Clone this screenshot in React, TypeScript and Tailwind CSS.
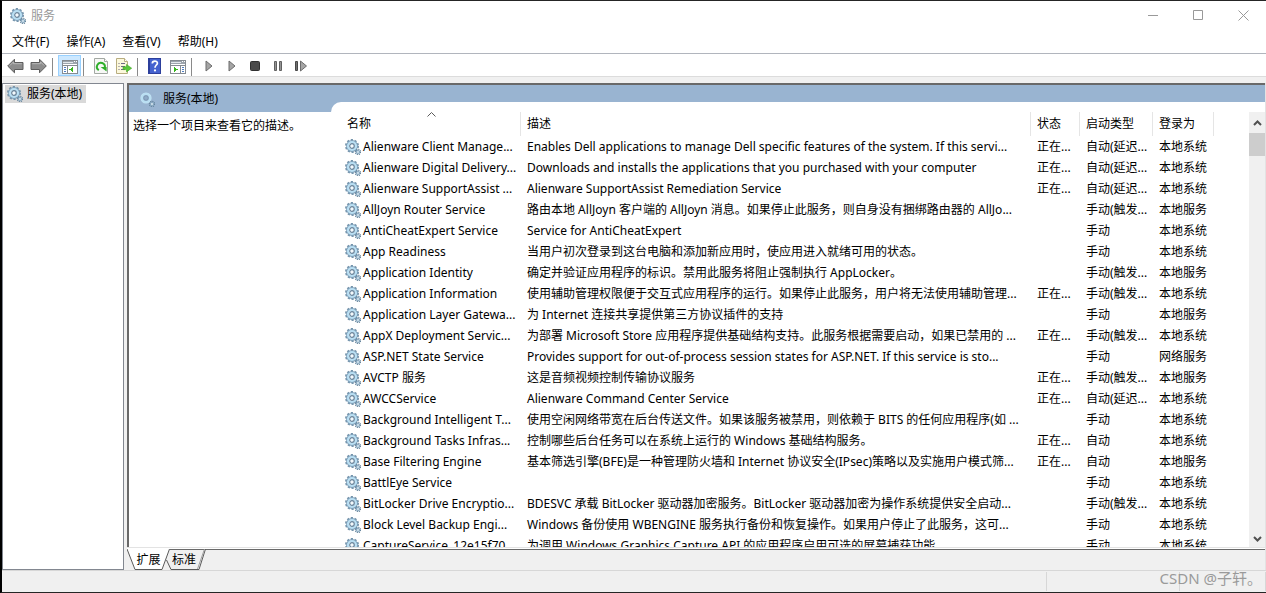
import type { ReactNode } from 'react'

interface Service {
  name: string
  description: string
  status: string
  startup: string
  logon: string
}

const RUNNING = '正在...'
const LOCAL_SYSTEM = '本地系统'
const LOCAL_SERVICE = '本地服务'

const SERVICES: Service[] = [
  { name: 'Alienware Client Manage...', description: 'Enables Dell applications to manage Dell specific features of the system. If this servi...', status: RUNNING, startup: '自动(延迟...', logon: LOCAL_SYSTEM },
  { name: 'Alienware Digital Delivery...', description: 'Downloads and installs the applications that you purchased with your computer', status: RUNNING, startup: '自动(延迟...', logon: LOCAL_SYSTEM },
  { name: 'Alienware SupportAssist ...', description: 'Alienware SupportAssist Remediation Service', status: RUNNING, startup: '自动(延迟...', logon: LOCAL_SYSTEM },
  { name: 'AllJoyn Router Service', description: '路由本地 AllJoyn 客户端的 AllJoyn 消息。如果停止此服务，则自身没有捆绑路由器的 AllJo...', status: '', startup: '手动(触发...', logon: LOCAL_SERVICE },
  { name: 'AntiCheatExpert Service', description: 'Service for AntiCheatExpert', status: '', startup: '手动', logon: LOCAL_SYSTEM },
  { name: 'App Readiness', description: '当用户初次登录到这台电脑和添加新应用时，使应用进入就绪可用的状态。', status: '', startup: '手动', logon: LOCAL_SYSTEM },
  { name: 'Application Identity', description: '确定并验证应用程序的标识。禁用此服务将阻止强制执行 AppLocker。', status: '', startup: '手动(触发...', logon: LOCAL_SERVICE },
  { name: 'Application Information', description: '使用辅助管理权限便于交互式应用程序的运行。如果停止此服务，用户将无法使用辅助管理...', status: RUNNING, startup: '手动(触发...', logon: LOCAL_SYSTEM },
  { name: 'Application Layer Gatewa...', description: '为 Internet 连接共享提供第三方协议插件的支持', status: '', startup: '手动', logon: LOCAL_SERVICE },
  { name: 'AppX Deployment Servic...', description: '为部署 Microsoft Store 应用程序提供基础结构支持。此服务根据需要启动，如果已禁用的 ...', status: RUNNING, startup: '手动(触发...', logon: LOCAL_SYSTEM },
  { name: 'ASP.NET State Service', description: 'Provides support for out-of-process session states for ASP.NET. If this service is sto...', status: '', startup: '手动', logon: '网络服务' },
  { name: 'AVCTP 服务', description: '这是音频视频控制传输协议服务', status: RUNNING, startup: '手动(触发...', logon: LOCAL_SERVICE },
  { name: 'AWCCService', description: 'Alienware Command Center Service', status: RUNNING, startup: '自动(延迟...', logon: LOCAL_SYSTEM },
  { name: 'Background Intelligent T...', description: '使用空闲网络带宽在后台传送文件。如果该服务被禁用，则依赖于 BITS 的任何应用程序(如 ...', status: '', startup: '手动', logon: LOCAL_SYSTEM },
  { name: 'Background Tasks Infras...', description: '控制哪些后台任务可以在系统上运行的 Windows 基础结构服务。', status: RUNNING, startup: '自动', logon: LOCAL_SYSTEM },
  { name: 'Base Filtering Engine', description: '基本筛选引擎(BFE)是一种管理防火墙和 Internet 协议安全(IPsec)策略以及实施用户模式筛...', status: RUNNING, startup: '自动', logon: LOCAL_SERVICE },
  { name: 'BattlEye Service', description: '', status: '', startup: '手动', logon: LOCAL_SYSTEM },
  { name: 'BitLocker Drive Encryptio...', description: 'BDESVC 承载 BitLocker 驱动器加密服务。BitLocker 驱动器加密为操作系统提供安全启动...', status: '', startup: '手动(触发...', logon: LOCAL_SYSTEM },
  { name: 'Block Level Backup Engi...', description: 'Windows 备份使用 WBENGINE 服务执行备份和恢复操作。如果用户停止了此服务，这可...', status: '', startup: '手动', logon: LOCAL_SYSTEM },
  { name: 'CaptureService_12e15f70', description: '为调用 Windows Graphics Capture API 的应用程序启用可选的屏幕捕获功能。', status: '', startup: '手动', logon: LOCAL_SYSTEM },
]

const MENUS = ['文件(F)', '操作(A)', '查看(V)', '帮助(H)']

function GearIcon({ faded = false }: { faded?: boolean }) {
  return (
    <svg viewBox="0 0 16 16" className="size-4 shrink-0" aria-hidden="true">
      {!faded && (
        <circle cx="7" cy="7" r="6" fill="none" stroke="#7393ab" strokeWidth="2" strokeDasharray="2.1 1.67" />
      )}
      <circle cx="7" cy="7" r="4.6" fill="none" stroke={faded ? '#c3e2f2' : '#7f9fb8'} strokeWidth={faded ? 2 : 2.6} />
      <circle cx="7" cy="7" r="4" fill="none" stroke="#b9dff3" strokeWidth="2.2" />
      <circle cx="7" cy="7" r="2.3" fill={faded ? '#8fabc9' : '#f4f9fc'} stroke="#66839b" strokeWidth={faded ? 0.5 : 1.2} />
      <circle cx="13" cy="13" r="2.5" fill="none" stroke="#66859d" strokeWidth="1.5" strokeDasharray="1.1 0.86" />
      <circle cx="13" cy="13" r="1.5" fill="#e3f1f8" stroke="#85a6be" strokeWidth="1.2" />
    </svg>
  )
}

function ArrowIcon({ flip = false }: { flip?: boolean }) {
  return (
    <svg viewBox="0 0 17 16" className={flip ? 'h-4 w-[17px] -scale-x-100' : 'h-4 w-[17px]'} aria-hidden="true">
      <path d="M0.7 8 7.5 1.2V4.5H16v7H7.5v3.3Z" fill="#8c8c8c" stroke="#5e5e5e" />
      <path d="M2.8 7.6 6.4 4V5.700H14.8" fill="none" stroke="#b9b9b9" />
    </svg>
  )
}

function PaneIcon({ right = false }: { right?: boolean }) {
  return (
    <svg viewBox="0 0 16 14" className="mt-0.5 h-3.5 w-4" shapeRendering="crispEdges" aria-hidden="true">
      <rect x="0.5" y="0.5" width="15" height="13" fill="#fff" stroke="#858b91" />
      <path d="M1 1h14v3H1z" fill="#9da5ad" />
      <path d="M1 2.5h10" stroke="#e4e8ec" />
      <path d="M12 1h1v1h-1zM14 1h1v1h-1z" fill="#fff" />
      <path d="M1 5.5h14" stroke="#858b91" />
      {right ? (
        <>
          <path d="M10.5 6v7" stroke="#858b91" />
          <path d="M12 7.5h2M12 9.5h2M12 11.5h2" stroke="#4f7fc4" />
          <path d="M4 7v5l4-2.5Z" fill="#37b51d" />
        </>
      ) : (
        <>
          <path d="M5.5 6v7" stroke="#858b91" />
          <path d="M2 7.5h2M2 9.5h2M2 11.5h2" stroke="#4f7fc4" />
          <path d="M11 7v5L7 9.5Z" fill="#37b51d" />
        </>
      )}
    </svg>
  )
}

function RefreshIcon() {
  return (
    <svg viewBox="0 0 14 16" className="h-4 w-3.5" aria-hidden="true">
      <path d="M0.5 0.5h10l3 3v12H.5Z" fill="#f7f8f6" stroke="#a3a8a3" />
      <path d="M10.5.5v3h3" fill="#fff" stroke="#a3a8a3" />
      <path d="M4.8 12.2A4 4 0 1 1 10.8 9.6" fill="none" stroke="#2fae2b" strokeWidth="2" />
      <path d="M6.6 9h6v4.6Z" fill="#2fae2b" />
    </svg>
  )
}

function ExportIcon() {
  return (
    <svg viewBox="0 0 16 16" className="size-4" aria-hidden="true">
      <path d="M.5.5h8l3 3v12H.5Z" fill="#fcf8dc" stroke="#b8ad80" />
      <path d="M8.5.5v3h3" fill="#fff" stroke="#b8ad80" />
      <path d="M2.5 5.5h1M2.5 8.5h1M2.5 11.5h1M5 5.5h4M5 8.5h4M5 11.5h4" stroke="#6e6a85" />
      <path d="M7 8.800h3.500V6.500L15.700 10.200l-5.200 3.700v-2.300H7Z" fill="#5ac83a" stroke="#41a526" strokeWidth="0.6" />
    </svg>
  )
}

function HelpIcon() {
  return (
    <svg viewBox="0 0 13 16" className="h-4 w-[13px]" aria-hidden="true">
      <path d="M0 0h13v16H0z" fill="#2c3f9c" />
      <path d="M2 1h10v14H2z" fill="#4562cf" />
      <path d="M4.3 5.4C4.3 2.2 9.5 2.4 9.4 5.2 9.3 7 7 7.2 7 9.8" fill="none" stroke="#fff" strokeWidth="1.7" />
      <circle cx="7" cy="12.4" r="1.1" fill="#fff" />
    </svg>
  )
}

function PlayIcon() {
  return (
    <svg viewBox="0 0 8 12" className="h-3 w-2" aria-hidden="true">
      <path d="M1 1v10l6-5Z" fill="#a5a5a5" stroke="#6d6d6d" />
    </svg>
  )
}

function ToolButton({ label, active = false, children }: { label: string; active?: boolean; children: ReactNode }) {
  return (
    <button
      aria-label={label}
      className={
        active
          ? 'flex h-[21px] w-[23px] items-center justify-center border border-[#99d1ff] bg-[#cce8ff]'
          : 'flex h-[21px] w-[23px] items-center justify-center'
      }
    >
      {children}
    </button>
  )
}

function ToolSeparator() {
  return <div className="mr-[5px] ml-0.5 h-[18px] w-px bg-[#8a8a8a]" />
}

function Chevron({ up = false }: { up?: boolean }) {
  return (
    <svg viewBox="0 0 9 6" className="h-1.5 w-[9px]" fill="none" stroke="#505050" strokeWidth="2" aria-hidden="true">
      <path d={up ? 'M1 5 4.5 1.5 8 5' : 'M1 1 4.5 4.5 8 1'} />
    </svg>
  )
}

function TitleBar() {
  return (
    <header className="flex h-[29px] shrink-0 items-center bg-white pl-2">
      <GearIcon />
      <h1 className="ml-[5px] text-[#999999]">服务</h1>
      <div className="ml-auto flex h-full text-[#999999]">
        <button aria-label="最小化" className="flex w-[45px] items-center justify-center">
          <svg viewBox="0 0 11 11" className="size-[11px]" stroke="currentColor"><path d="M0 5.5h10" /></svg>
        </button>
        <button aria-label="最大化" className="flex w-[45px] items-center justify-center">
          <svg viewBox="0 0 11 11" className="size-[11px]" fill="none" stroke="currentColor"><path d="M.5.5h9v9h-9z" /></svg>
        </button>
        <button aria-label="关闭" className="flex w-[45px] items-center justify-center">
          <svg viewBox="0 0 11 11" className="size-[11px]" stroke="currentColor"><path d="m.5.5 10 10M10.5.5l-10 10" /></svg>
        </button>
      </div>
    </header>
  )
}

function Toolbar() {
  return (
    <div className="flex h-[24px] shrink-0 items-end border-t border-b border-t-[#b1b5bd] border-b-[#dcdcdc] bg-white pl-0.5">
      <ToolButton label="后退"><ArrowIcon /></ToolButton>
      <ToolButton label="前进"><ArrowIcon flip /></ToolButton>
      <ToolSeparator />
      <ToolButton label="显示/隐藏控制台树" active><PaneIcon /></ToolButton>
      <ToolSeparator />
      <ToolButton label="刷新"><RefreshIcon /></ToolButton>
      <ToolButton label="导出列表"><ExportIcon /></ToolButton>
      <ToolSeparator />
      <ToolButton label="帮助"><HelpIcon /></ToolButton>
      <ToolButton label="显示/隐藏操作窗格"><PaneIcon right /></ToolButton>
      <ToolSeparator />
      <ToolButton label="启动服务"><PlayIcon /></ToolButton>
      <ToolButton label="恢复服务"><PlayIcon /></ToolButton>
      <ToolButton label="停止服务">
        <svg viewBox="0 0 10 10" className="size-2.5" aria-hidden="true">
          <rect x="0.5" y="0.5" width="9" height="9" rx="1" fill="#4a4a4a" stroke="#303030" />
        </svg>
      </ToolButton>
      <ToolButton label="暂停服务">
        <svg viewBox="0 0 8 10" className="h-2.5 w-2" aria-hidden="true">
          <path d="M.5.5h2v9h-2zM5.5.5h2v9h-2z" fill="#959595" stroke="#606060" />
        </svg>
      </ToolButton>
      <ToolButton label="重新启动服务">
        <svg viewBox="0 0 12 12" className="size-3" aria-hidden="true">
          <path d="M.5 1.5h2v9h-2z" fill="#707070" stroke="#484848" />
          <path d="M5.5 1v10l6-5Z" fill="#a5a5a5" stroke="#6d6d6d" />
        </svg>
      </ToolButton>
    </div>
  )
}

function ServiceTable() {
  return (
    <table className="w-full table-fixed border-collapse whitespace-nowrap">
      <colgroup>
        <col className="w-[180px]" />
        <col />
        <col className="w-[49px]" />
        <col className="w-[73px]" />
        <col className="w-[61px]" />
        <col className="w-[35px]" />
      </colgroup>
      <thead>
        <tr className="h-6 text-left [&>th]:p-0 [&>th]:font-normal">
          <th>
            <div className="relative flex h-6 items-center border-r border-[#e5e5e5] pl-1.5">
              名称
              <svg viewBox="0 0 9 5" className="absolute top-0 left-[86px] h-[5px] w-[9px]" fill="none" stroke="#5a5a5a" aria-hidden="true">
                <path d="M.5 4.5 4.5.5l4 4" />
              </svg>
            </div>
          </th>
          <th><div className="flex h-6 items-center border-r border-[#e5e5e5] pl-1.5">描述</div></th>
          <th><div className="flex h-6 items-center border-r border-[#e5e5e5] pl-1.5">状态</div></th>
          <th><div className="flex h-6 items-center border-r border-[#e5e5e5] pl-1.5">启动类型</div></th>
          <th><div className="flex h-6 items-center border-r border-[#e5e5e5] pl-1.5">登录为</div></th>
          <th></th>
        </tr>
      </thead>
      <tbody>
        {SERVICES.map((s) => (
          <tr key={s.name} className="h-[21px] [&>td]:overflow-hidden [&>td]:p-0">
            <td>
              <div className="flex items-center gap-0.5 pl-1">
                <GearIcon />
                {s.name}
              </div>
            </td>
            <td><div className="pl-1.5">{s.description}</div></td>
            <td><div className="pl-1.5">{s.status}</div></td>
            <td><div className="pl-1.5">{s.startup}</div></td>
            <td><div className="pl-1.5">{s.logon}</div></td>
            <td></td>
          </tr>
        ))}
      </tbody>
    </table>
  )
}

function ViewTabs() {
  return (
    <div className="flex h-[21px] shrink-0">
      <button className="relative h-[21px] w-[43px]">
        <svg viewBox="0 0 43 21" className="absolute inset-0" aria-hidden="true">
          <path d="M0 0 8 20.5h27L42.5 0" fill="#fff" stroke="#5a5a5a" />
        </svg>
        <span className="relative">扩展</span>
      </button>
      <div className="flex-1 border-t border-[#696969]">
        <button className="relative -mt-px -ml-1 h-[21px] w-10 pr-1">
          <svg viewBox="0 0 40 21" className="absolute inset-0" fill="none" stroke="#5a5a5a" aria-hidden="true">
            <path d="m.5 11 4.500 9.500h28L39.500 0" />
            <path d="M31.500 20 38.500 0" stroke="#a0a0a0" />
          </svg>
          <span className="relative">标准</span>
        </button>
      </div>
    </div>
  )
}

export default function App() {
  return (
    <div className="relative flex h-screen flex-col border-t border-b border-l-2 border-t-[#252525] border-b-[#252525] border-l-black bg-[#f0f0f0] font-['Noto_Sans','Noto_Sans_CJK_SC',sans-serif] text-[12px] leading-4 text-black">
      <TitleBar />
      <nav className="flex h-[23px] shrink-0 items-center gap-[17px] bg-white pl-2.5">
        {MENUS.map((m) => (
          <button key={m}>{m}</button>
        ))}
      </nav>
      <Toolbar />

      <main className="flex min-h-0 flex-1 gap-[3px] pt-1.5">
        {/* Console tree */}
        <aside className="w-[122px] shrink-0 border border-[#828790] bg-white">
          <button className="mt-px ml-0.5 flex h-[18px] items-center gap-1 bg-[#d9d9d9] px-1 pl-0.5">
            <GearIcon />
            服务(本地)
          </button>
        </aside>

        <section className="flex min-w-0 flex-1 flex-col border-r border-[#e3e3e3]">
          <div className="flex min-h-0 flex-1 border-t-2 border-l-2 border-[#696969]">
            {/* Description of the selected service */}
            <div className="w-[202px] shrink-0 bg-white">
              <h2 className="flex h-[27px] items-center gap-2 bg-[#99b4d1] pl-2.5">
                <GearIcon faded />
                服务(本地)
              </h2>
              <p className="px-1 py-1.5">选择一个项目来查看它的描述。</p>
            </div>

            <div className="flex min-w-0 flex-1 flex-col bg-[#99b4d1] pt-[17px]">
              <div className="flex min-h-0 flex-1 rounded-tl-[10px] bg-white pt-2.5 pl-2.5">
                <div className="min-w-0 flex-1 overflow-hidden">
                  <ServiceTable />
                </div>
                <div className="flex w-4 shrink-0 flex-col items-center bg-[#f0f0f0]">
                  <button aria-label="向上滚动" className="flex h-[21px] w-full shrink-0 items-center justify-center">
                    <Chevron up />
                  </button>
                  <div className="h-[23px] w-full shrink-0 bg-[#cdcdcd]" />
                  <button aria-label="向下滚动" className="mt-auto flex h-[17px] w-full shrink-0 items-center justify-center">
                    <Chevron />
                  </button>
                </div>
              </div>
            </div>
          </div>
          <div className="h-0.5 shrink-0 border-t border-[#e3e3e3] bg-white" />
          <ViewTabs />
        </section>
      </main>

      <footer className="flex h-[22px] shrink-0 border-t border-[#d7d7d7] py-px">
        <div className="flex-1 border-r border-[#d7d7d7]" />
        <div className="w-[133px] border-r border-[#d7d7d7]" />
        <div className="w-[86px] border-r border-[#d7d7d7]" />
      </footer>

      {/* Watermark */}
      <div className="absolute right-1 bottom-1 text-[15px] leading-5 text-[#9a9a9a]">CSDN @子轩。</div>
    </div>
  )
}
